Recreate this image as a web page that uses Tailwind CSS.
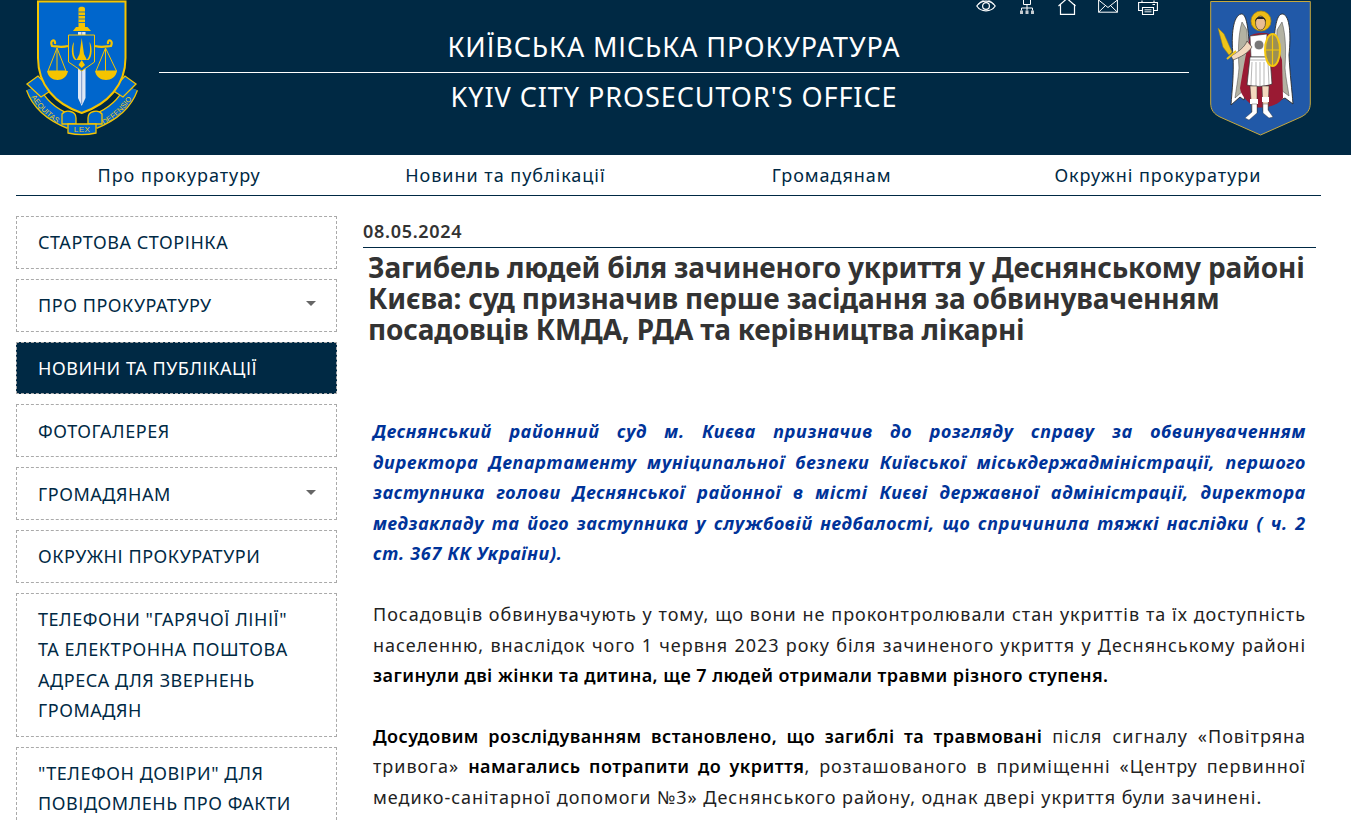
<!DOCTYPE html>
<html lang="uk" class="h-[821px] overflow-hidden">
<head>
<meta charset="utf-8">
<title>Київська міська прокуратура</title>
<script src="https://cdn.jsdelivr.net/npm/@tailwindcss/browser@4"></script>
</head>
<body class="relative h-[821px] overflow-hidden bg-white font-['Noto_Sans','Open_Sans',sans-serif] text-[18px] text-[#002944]">
<header class="relative flex h-[155px] items-start bg-[#002944] pl-[20px]">
  <svg class="h-[140px] w-[125px] shrink-0" viewBox="20 0 125 140" fill="none">
    <path d="M33 88C38 102 50 114 70 122" stroke="#f5c400" stroke-width="15"/>
    <path d="M33 88C38 102 50 114 70 122" stroke="#0066cc" stroke-width="12.500"/>
    <path d="M131 88C126 102 114 114 94 122" stroke="#f5c400" stroke-width="15"/>
    <path d="M131 88C126 102 114 114 94 122" stroke="#0066cc" stroke-width="12.500"/>
    <path d="M27 84L38 76L52 90L41 97Z" fill="#0066cc" stroke="#f5c400" stroke-width="1.300"/>
    <path d="M136 84L125 76L112 90L123 97Z" fill="#0066cc" stroke="#f5c400" stroke-width="1.300"/>
    <path d="M38 1.500H125.500V58C125.500 85 108 104 81.700 113C55 104 38 85 38 58Z" fill="#0066cc" stroke="#f5c400" stroke-width="2"/>
    <path d="M62 114C66 109 76 111 76 118V124H62ZM102 114C98 109 88 111 88 118V124H102Z" fill="#0066cc" stroke="#f5c400" stroke-width="1.300"/>
    <path d="M68 124H96V133C87 135 77 135 68 133Z" fill="#0066cc" stroke="#f5c400" stroke-width="1.300"/>
    <text x="82" y="132" text-anchor="middle" font-size="8" fill="#e8c818" font-family="Liberation Sans, sans-serif" letter-spacing=".4">LEX</text>
    <path id="rl" d="M31 97C38 108 48 118 60 125"/>
    <path id="rr" d="M104 125C116 118 126 108 133 97"/>
    <text font-size="7.500" fill="#e8c818" font-family="Liberation Sans, sans-serif"><textPath href="#rl">AEQUITAS</textPath></text>
    <text font-size="7.500" fill="#e8c818" font-family="Liberation Sans, sans-serif"><textPath href="#rr">DEFENSIO</textPath></text>
    <path d="M78.500 28V8.500C78.500 6 85 6 85 8.500V28Z" fill="#f5c400"/>
    <path d="M78.500 12H85M78.500 15.500H85M78.500 19H85M78.500 22.500H85" stroke="#0066cc" stroke-width=".8"/>
    <path d="M76 27H87.500L91 31H73Z" fill="#f5c400"/>
    <path d="M78 32H85.500V98L81.700 106L78 98Z" fill="#dfe8f5"/>
    <path d="M81.700 32V104" stroke="#7d98c8"/>
    <path d="M68.500 35H94.500V62L81.700 71L68.500 62Z" fill="#0066cc" stroke="#f5c400" stroke-width="1"/>
    <path d="M81.700 38L84 54L87 60H76.500L79.500 54ZM74 42C73 50 73 56 77 60H75C71 57 71 46 74 42ZM89.500 42C90.500 50 90.500 56 86.500 60H88.500C92.500 57 92.500 46 89.500 42ZM81.700 60L85 65L81.700 68L78.500 65Z" fill="#f5c400"/>
    <path d="M68 46C60 48 56 46 52 46C49 40 56 38 55 44M95 46C103 48 107 46 111 46C114 40 107 38 108 44" stroke="#f5c400" stroke-width="2.200"/>
    <path d="M57 48L66 71H48ZM57 48V71M105.500 48L116.500 71H96ZM105.500 48V71" stroke="#f5c400" stroke-width="1"/>
    <path d="M47 71H68C66 83 49 83 47 71ZM95 71H117C115 83 97 83 95 71Z" fill="#f5c400"/>
  </svg>
  <div class="ml-[14px] flex h-[145px] w-[1030px] shrink-0 flex-col">
    <h1 class="flex h-[73px] items-end justify-center border-b border-white pb-[5px] text-center text-[27px] leading-[40px] tracking-[.9px] text-white">КИЇВСЬКА МІСЬКА ПРОКУРАТУРА</h1>
    <div class="pt-[4px] text-center text-[27px] leading-[40px] tracking-[.95px] text-white">KYIV CITY PROSECUTOR'S OFFICE</div>
  </div>
  <svg class="ml-[11px] h-[140px] w-[120px] shrink-0" viewBox="1200 0 120 140">
    <path d="M1210.700 1.500H1310.300V103C1310.300 110 1307 114 1301 117L1260.500 135L1220 117C1214 114 1210.700 110 1210.700 103Z" fill="#2159a8" stroke="#c8a93c" stroke-width="1"/>
    <path d="M1249 42C1248 26 1246 13 1241 14C1233 16 1231 35 1233 55C1234 75 1232 90 1231 105L1240 97L1244 100L1249 70Z" fill="#fff" stroke="#2b2b2b" stroke-width=".9"/>
    <path d="M1274 42C1275 26 1277 13 1283 14C1290 16 1291 35 1289 55C1290 75 1292 90 1293 104L1285 98L1280 100L1274 70Z" fill="#fff" stroke="#2b2b2b" stroke-width=".9"/>
    <path d="M1242 22C1238 35 1238 52 1239 68C1238 80 1236 90 1235 98L1244 90L1248 60L1247 30Z" fill="#b3b2a2" stroke="#444" stroke-width=".5"/>
    <path d="M1282 22C1286 35 1286 52 1285 68C1286 80 1288 88 1289 96L1281 90L1276 60L1277 30Z" fill="#b3b2a2" stroke="#444" stroke-width=".5"/>
    <circle cx="1261" cy="21" r="10" fill="#eebc16" stroke="#b28a0c" stroke-width=".7"/>
    <path d="M1250 36C1254 32 1270 32 1274 36L1282 60L1283 98C1278 106 1265 109 1254 107C1248 102 1241 96 1240 88C1243 70 1246 52 1250 36Z" fill="#9a1a33"/>
    <ellipse cx="1260.500" cy="23" rx="5" ry="7" fill="#e9bd93" stroke="#222" stroke-width=".6"/>
    <path d="M1255 22C1255 15 1266 15 1266 22L1264 19H1257Z" fill="#222"/>
    <path d="M1250 36L1267 34L1266 57H1251Z" fill="#fff" stroke="#333" stroke-width=".6"/>
    <circle cx="1259" cy="45" r="5" fill="#777" stroke="#fff" stroke-width="1"/>
    <path d="M1247 41C1245 47 1238 52 1231 56L1233 60C1241 57 1248 53 1252 47Z" fill="#f3d9bf" stroke="#333" stroke-width=".6"/>
    <path d="M1218 28L1224 34L1232 52L1229 55L1223 47Z" fill="#eec41a" stroke="#a8860a" stroke-width=".5"/>
    <path d="M1227 59L1236 51" stroke="#eec41a" stroke-width="2"/>
    <path d="M1250 57H1270L1272 84C1264 87 1255 87 1247 85Z" fill="#fff" stroke="#333" stroke-width=".7"/>
    <path d="M1250 60H1270M1252 62L1251 85M1256 62V86M1260 62V86M1264 62V86M1268 62L1269 85" stroke="#888" stroke-width=".6"/>
    <path d="M1250 86H1257L1257 113H1252ZM1262 86H1269L1268 111H1263Z" fill="#f3d9bf" stroke="#333" stroke-width=".5"/>
    <path d="M1250 99H1258V104H1250ZM1262 97H1269V102H1262Z" fill="#fff"/>
    <path d="M1252 104H1257V113L1249 120L1245 118L1252 112ZM1263 104H1268V110L1273 117L1269 118L1263 113Z" fill="#fff" stroke="#333" stroke-width=".4"/>
    <ellipse cx="1272.500" cy="50" rx="7.500" ry="16" fill="#9b8f55" stroke="#f4c80e" stroke-width="2"/>
    <path d="M1272.500 35V65M1265.500 50H1279.500" stroke="#f4c80e" stroke-width="1.200"/>
  </svg>
  <div class="absolute left-[978px] top-0 flex gap-[20px] text-white">
    <svg class="-ml-[2px] mr-[2px] h-[15px] w-[20px]" viewBox="0 0 20 15" fill="none" stroke="currentColor" stroke-width="1.200"><path d="M.8 6C5 -.5 15 -.5 19.200 6C15 12.500 5 12.500 .8 6Z"/><circle cx="10" cy="6" r="3.400"/><path d="M7.500 .5C5 1 3 3 2.500 5M12.500 .5C15 1 17 3 17.500 5" stroke-width=".7"/></svg>
    <svg class="h-[15px] w-[20px]" viewBox="0 0 20 15" fill="none" stroke="currentColor"><path d="M5.500 -1V4.500H12.500V-1M9 4.500V8M3.500 10.500V8H14.500V10.500M9 8V10.500" stroke-width="1"/><path d="M2 10.500H5V14H2ZM7.500 10.500H10.500V14H7.500ZM13 10.500H16V14H13Z" fill="#c6ccd1" stroke="none"/></svg>
    <svg class="h-[15px] w-[20px]" viewBox="0 0 20 15" fill="none" stroke="currentColor" stroke-width="1.200"><path d="M.5 6L9 -1.500L17.500 6M2.500 4V14.400H16.500V4"/></svg>
    <svg class="h-[15px] w-[20px]" viewBox="0 0 20 15" fill="none" stroke="currentColor" stroke-width="1"><path d="M.6 0V12.200H19.400V0M.6 0L10 7.500L19.400 0M.6 12.200L7.500 5.500M19.400 12.200L12.500 5.500"/></svg>
    <svg class="h-[15px] w-[20px]" viewBox="0 0 20 15" fill="none" stroke="currentColor" stroke-width="1.100"><path d="M4.500 10.500H.6V2.500H19.400V10.500H15.500M4 2.500V.5M16 2.500V.5"/><path d="M4.500 7.500H15.500V14.500H4.500Z"/><path d="M6.500 9.800H13.500M6.500 11.800H13.500" stroke-width=".9"/><path d="M14.500 4.500H17" stroke-width="1"/></svg>
  </div>
</header>

<nav class="ml-[16px] grid h-[41px] w-[1305px] grid-cols-4 border-b border-[#002944] text-center leading-[41px] tracking-[.97px]">
  <a>Про прокуратуру</a><a>Новини та публікації</a><a>Громадянам</a><a>Окружні прокуратури</a>
</nav>

<div class="mx-[16px] flex items-start">
  <aside class="mt-[20px] flex w-[321px] shrink-0 flex-col gap-[10px] tracking-[.55px]">
    <a class="flex h-[52.800px] items-center border border-dashed border-[#aaa] pl-[21px] pr-[20px] pt-[1px]">СТАРТОВА СТОРІНКА</a>
    <a class="flex h-[52.800px] items-center justify-between border border-dashed border-[#aaa] pl-[21px] pr-[20px]">ПРО ПРОКУРАТУРУ<i class="mb-[3px] h-0 w-0 border-x-[5px] border-t-[5px] border-x-transparent border-t-[#666]"></i></a>
    <a class="flex h-[52.800px] items-center border border-dashed border-[#aaa] bg-[#002944] pl-[21px] pr-[20px] pt-[1px] text-white">НОВИНИ ТА ПУБЛІКАЦІЇ</a>
    <a class="flex h-[52.800px] items-center border border-dashed border-[#aaa] pl-[21px] pr-[20px] pt-[1px]">ФОТОГАЛЕРЕЯ</a>
    <a class="flex h-[52.800px] items-center justify-between border border-dashed border-[#aaa] pl-[21px] pr-[20px] pt-[1px]">ГРОМАДЯНАМ<i class="mb-[3px] h-0 w-0 border-x-[5px] border-t-[5px] border-x-transparent border-t-[#666]"></i></a>
    <a class="flex h-[52.800px] items-center border border-dashed border-[#aaa] pl-[21px] pr-[20px]">ОКРУЖНІ ПРОКУРАТУРИ</a>
    <a class="block border border-dashed border-[#aaa] py-[10px] pl-[21px] pr-[20px] leading-[30.500px]">ТЕЛЕФОНИ "ГАРЯЧОЇ ЛІНІЇ" <br>ТА ЕЛЕКТРОННА ПОШТОВА <br>АДРЕСА ДЛЯ ЗВЕРНЕНЬ <br>ГРОМАДЯН</a>
    <a class="block border border-dashed border-[#aaa] py-[10px] pl-[21px] pr-[20px] leading-[30.500px]">"ТЕЛЕФОН ДОВІРИ" ДЛЯ <br>ПОВІДОМЛЕНЬ ПРО ФАКТИ <br>КОРУПЦІЇ</a>
  </aside>

  <main class="ml-[26px] mt-[20px] w-[953px] text-[#222]">
    <div class="h-[32px] border-b border-[#002944] text-[18px] font-semibold leading-[30px] tracking-[.7px] text-[#333]">08.05.2024</div>
    <h2 class="ml-[5px] mt-[4px] text-[28px] font-bold leading-[31px] tracking-[-.18px] text-[#333]">
      <span class="block">Загибель людей біля зачиненого укриття у Деснянському районі</span>
      <span class="block">Києва: суд призначив перше засідання за обвинуваченням</span>
      <span class="block">посадовців КМДА, РДА та керівництва лікарні</span>
    </h2>
    <div class="ml-[10px] mt-[71px] w-[933px] text-[18px] leading-[30.600px]">
      <p class="font-bold italic tracking-[.7px] text-[#003399]">
        <span class="block [text-align-last:justify]">Деснянський районний суд м. Києва призначив до розгляду справу за обвинуваченням</span>
        <span class="block [text-align-last:justify]">директора Департаменту муніципальної безпеки Київської міськдержадміністрації, першого</span>
        <span class="block [text-align-last:justify]">заступника голови Деснянської районної в місті Києві державної адміністрації, директора</span>
        <span class="block [text-align-last:justify]">медзакладу та його заступника у службовій недбалості, що спричинила тяжкі наслідки ( ч. 2</span>
        <span class="block">ст. 367 КК України).</span>
      </p>
      <p class="mt-[30px] tracking-[.97px]">
        <span class="block [text-align-last:justify]">Посадовців обвинувачують у тому, що вони не проконтролювали стан укриттів та їх доступність</span>
        <span class="block [text-align-last:justify]">населенню, внаслідок чого 1 червня  2023 року біля зачиненого укриття у Деснянському районі</span>
        <span class="block font-semibold tracking-[.44px] text-black">загинули дві жінки та дитина, ще 7 людей отримали травми різного ступеня.</span>
      </p>
      <p class="mt-[30px] tracking-[.97px]">
        <span class="block [text-align-last:justify]"><b class="font-semibold tracking-[.44px] text-black">Досудовим розслідуванням встановлено, що загиблі та травмовані</b> після сигналу «Повітряна</span>
        <span class="block [text-align-last:justify]">тривога» <b class="font-semibold tracking-[.44px] text-black">намагались потрапити до укриття</b>, розташованого в приміщенні «Центру первинної</span>
        <span class="block">медико-санітарної допомоги №3» Деснянського району, однак двері укриття були зачинені.</span>
      </p>
    </div>
  </main>
</div>
</body>
</html>
